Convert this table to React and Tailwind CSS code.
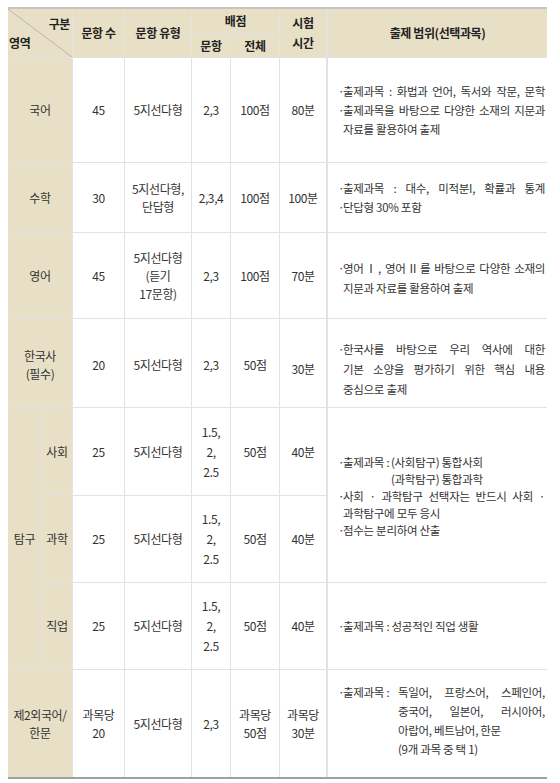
import React from "react";

const B = "border-[#e2e2e2]";

function Cell({ className = "", children }) {
  return (
    <div
      className={
        "flex flex-col items-center justify-center text-center leading-[18px] border-b border-r border-[#e2e2e2] " +
        className
      }
    >
      {children}
    </div>
  );
}

function J({ children }) {
  return <div className="whitespace-nowrap text-justify [text-align-last:justify]">{children}</div>;
}
function L({ children }) {
  return <div className="whitespace-nowrap text-left">{children}</div>;
}
function Item({ children }) {
  return (
    <div className="flex">
      <span className="w-[5px] shrink-0 text-left">·</span>
      <div className="flex-1 min-w-0">{children}</div>
    </div>
  );
}
function Desc({ className = "", children }) {
  return (
    <div
      className={
        "flex flex-col justify-center text-[11.5px] tracking-[-0.3px] pl-[10px] pr-[2px] border-b border-[#e2e2e2] " +
        className
      }
    >
      {children}
    </div>
  );
}

export default function App() {
  return (
    <div className="w-[560px] h-[783px] bg-white pl-[8px] pt-[7px] font-['Noto_Sans_CJK_KR','Noto_Sans',sans-serif] text-[#333]">
      <div className="w-[539px] border-t-2 border-b-2 border-t-[#c4c4c4] border-b-[#a0a0a0]">
        <div className="grid grid-cols-[34px_31px_52px_67px_39px_49px_48px_219px] grid-rows-[24px_25px_105px_70px_86px_89px_88px_87px_87px_107px] text-[12px] tracking-[-0.4px]">
          {/* Header */}
          <div className="relative col-start-1 col-span-2 row-start-1 row-span-2 bg-[#e8e0c6] border-b border-r border-[#e2e2e2] flex flex-col justify-between font-semibold text-[#222] leading-[16px]">
            <svg className="absolute inset-0 w-full h-full" preserveAspectRatio="none" viewBox="0 0 100 100">
              <line x1="0" y1="0" x2="100" y2="100" stroke="#b5b5b5" strokeWidth="1" vectorEffect="non-scaling-stroke" />
            </svg>
            <span className="self-end pr-[2px] pt-[7px]">구분</span>
            <span className="self-start pl-[1px] pb-[6px]">영역</span>
          </div>
          <Cell className="col-start-3 row-start-1 row-span-2 bg-[#e8e0c6] font-semibold text-[#222]">문항 수</Cell>
          <Cell className="col-start-4 row-start-1 row-span-2 bg-[#e8e0c6] font-semibold text-[#222]">문항 유형</Cell>
          <Cell className="col-start-5 col-span-2 row-start-1 bg-[#e8e0c6] font-semibold text-[#222]">배점</Cell>
          <Cell className="col-start-5 row-start-2 bg-[#e8e0c6] font-semibold text-[#222] pt-[2px]">문항</Cell>
          <Cell className="col-start-6 row-start-2 bg-[#e8e0c6] font-semibold text-[#222] pt-[2px]">전체</Cell>
          <Cell className="col-start-7 row-start-1 row-span-2 bg-[#e8e0c6] font-semibold text-[#222] leading-[20px] !border-r-2">
            <span>시험</span>
            <span>시간</span>
          </Cell>
          <Cell className="col-start-8 row-start-1 row-span-2 bg-[#e8e0c6] font-semibold text-[#222] !border-r-0">출제 범위(선택과목)</Cell>

          {/* 국어 */}
          <Cell className="col-start-1 col-span-2 row-start-3 bg-[#e8e0c6]">국어</Cell>
          <Cell className="col-start-3 row-start-3">45</Cell>
          <Cell className="col-start-4 row-start-3">5지선다형</Cell>
          <Cell className="col-start-5 row-start-3">2,3</Cell>
          <Cell className="col-start-6 row-start-3">100점</Cell>
          <Cell className="col-start-7 row-start-3 !border-r-2">80분</Cell>
          <Desc className="col-start-8 row-start-3 leading-[19px]">
            <Item><J>출제과목 : 화법과 언어, 독서와 작문, 문학</J></Item>
            <Item>
              <J>출제과목을 바탕으로 다양한 소재의 지문과</J>
              <L>자료를 활용하여 출제</L>
            </Item>
          </Desc>

          {/* 수학 */}
          <Cell className="col-start-1 col-span-2 row-start-4 bg-[#e8e0c6]">수학</Cell>
          <Cell className="col-start-3 row-start-4">30</Cell>
          <Cell className="col-start-4 row-start-4">
            <span>5지선다형,</span>
            <span>단답형</span>
          </Cell>
          <Cell className="col-start-5 row-start-4">2,3,4</Cell>
          <Cell className="col-start-6 row-start-4">100점</Cell>
          <Cell className="col-start-7 row-start-4 !border-r-2">100분</Cell>
          <Desc className="col-start-8 row-start-4 leading-[19px]">
            <Item><J>출제과목 : 대수, 미적분I, 확률과 통계</J></Item>
            <Item><L>단답형 30% 포함</L></Item>
          </Desc>

          {/* 영어 */}
          <Cell className="col-start-1 col-span-2 row-start-5 bg-[#e8e0c6]">영어</Cell>
          <Cell className="col-start-3 row-start-5">45</Cell>
          <Cell className="col-start-4 row-start-5">
            <span>5지선다형</span>
            <span>(듣기</span>
            <span>17문항)</span>
          </Cell>
          <Cell className="col-start-5 row-start-5">2,3</Cell>
          <Cell className="col-start-6 row-start-5">100점</Cell>
          <Cell className="col-start-7 row-start-5 !border-r-2">70분</Cell>
          <Desc className="col-start-8 row-start-5 leading-[20px] pt-[4px]">
            <Item>
              <J>영어Ⅰ, 영어Ⅱ를 바탕으로 다양한 소재의</J>
              <L>지문과 자료를 활용하여 출제</L>
            </Item>
          </Desc>

          {/* 한국사 */}
          <Cell className="col-start-1 col-span-2 row-start-6 bg-[#e8e0c6] pt-[4px]">
            <span>한국사</span>
            <span>(필수)</span>
          </Cell>
          <Cell className="col-start-3 row-start-6 pt-[4px]">20</Cell>
          <Cell className="col-start-4 row-start-6 pt-[4px]">5지선다형</Cell>
          <Cell className="col-start-5 row-start-6 pt-[4px]">2,3</Cell>
          <Cell className="col-start-6 row-start-6 pt-[4px]">50점</Cell>
          <Cell className="col-start-7 row-start-6 !border-r-2 pt-[12px]">30분</Cell>
          <Desc className="col-start-8 row-start-6 leading-[20px] pt-[12px]">
            <Item>
              <J>한국사를 바탕으로 우리 역사에 대한</J>
              <J>기본 소양을 평가하기 위한 핵심 내용</J>
              <L>중심으로 출제</L>
            </Item>
          </Desc>

          {/* 탐구 */}
          <Cell className="col-start-1 row-start-7 row-span-3 bg-[#e8e0c6]">탐구</Cell>
          <Cell className="col-start-2 row-start-7 bg-[#e8e0c6]">사회</Cell>
          <Cell className="col-start-3 row-start-7">25</Cell>
          <Cell className="col-start-4 row-start-7">5지선다형</Cell>
          <Cell className="col-start-5 row-start-7 leading-[20px]">
            <span>1.5,</span>
            <span>2,</span>
            <span>2.5</span>
          </Cell>
          <Cell className="col-start-6 row-start-7">50점</Cell>
          <Cell className="col-start-7 row-start-7 !border-r-2">40분</Cell>
          <Desc className="col-start-8 row-start-7 row-span-2 leading-[17px] pt-[2px]">
            <div className="flex">
              <span className="w-[5px] shrink-0">·</span>
              <span className="w-[48px] shrink-0 whitespace-nowrap">출제과목 :</span>
              <div>
                <L>(사회탐구) 통합사회</L>
                <L>(과학탐구) 통합과학</L>
              </div>
            </div>
            <Item>
              <J>사회 · 과학탐구 선택자는 반드시 사회 ·</J>
              <L>과학탐구에 모두 응시</L>
            </Item>
            <Item><L>점수는 분리하여 산출</L></Item>
          </Desc>

          <Cell className="col-start-2 row-start-8 bg-[#e8e0c6]">과학</Cell>
          <Cell className="col-start-3 row-start-8">25</Cell>
          <Cell className="col-start-4 row-start-8">5지선다형</Cell>
          <Cell className="col-start-5 row-start-8 leading-[20px]">
            <span>1.5,</span>
            <span>2,</span>
            <span>2.5</span>
          </Cell>
          <Cell className="col-start-6 row-start-8">50점</Cell>
          <Cell className="col-start-7 row-start-8 !border-r-2">40분</Cell>

          <Cell className="col-start-2 row-start-9 bg-[#e8e0c6]">직업</Cell>
          <Cell className="col-start-3 row-start-9">25</Cell>
          <Cell className="col-start-4 row-start-9">5지선다형</Cell>
          <Cell className="col-start-5 row-start-9 leading-[20px]">
            <span>1.5,</span>
            <span>2,</span>
            <span>2.5</span>
          </Cell>
          <Cell className="col-start-6 row-start-9">50점</Cell>
          <Cell className="col-start-7 row-start-9 !border-r-2">40분</Cell>
          <Desc className="col-start-8 row-start-9 leading-[19px]">
            <Item><L>출제과목 : 성공적인 직업 생활</L></Item>
          </Desc>

          {/* 제2외국어 */}
          <Cell className="col-start-1 col-span-2 row-start-10 bg-[#e8e0c6] !border-b-0">
            <span>제2외국어/</span>
            <span>한문</span>
          </Cell>
          <Cell className="col-start-3 row-start-10 !border-b-0">
            <span>과목당</span>
            <span>20</span>
          </Cell>
          <Cell className="col-start-4 row-start-10 !border-b-0">5지선다형</Cell>
          <Cell className="col-start-5 row-start-10 !border-b-0">2,3</Cell>
          <Cell className="col-start-6 row-start-10 !border-b-0">
            <span>과목당</span>
            <span>50점</span>
          </Cell>
          <Cell className="col-start-7 row-start-10 !border-b-0 !border-r-2">
            <span>과목당</span>
            <span>30분</span>
          </Cell>
          <Desc className="col-start-8 row-start-10 leading-[19px] !border-b-0 pb-[6px]">
            <div className="flex">
              <span className="w-[5px] shrink-0">·</span>
              <span className="w-[55px] shrink-0 whitespace-nowrap">출제과목 :</span>
              <div className="flex-1 min-w-0">
                <J>독일어, 프랑스어, 스페인어,</J>
                <J>중국어, 일본어, 러시아어,</J>
                <L>아랍어, 베트남어, 한문</L>
                <L>(9개 과목 중 택 1)</L>
              </div>
            </div>
          </Desc>
        </div>
      </div>
    </div>
  );
}
